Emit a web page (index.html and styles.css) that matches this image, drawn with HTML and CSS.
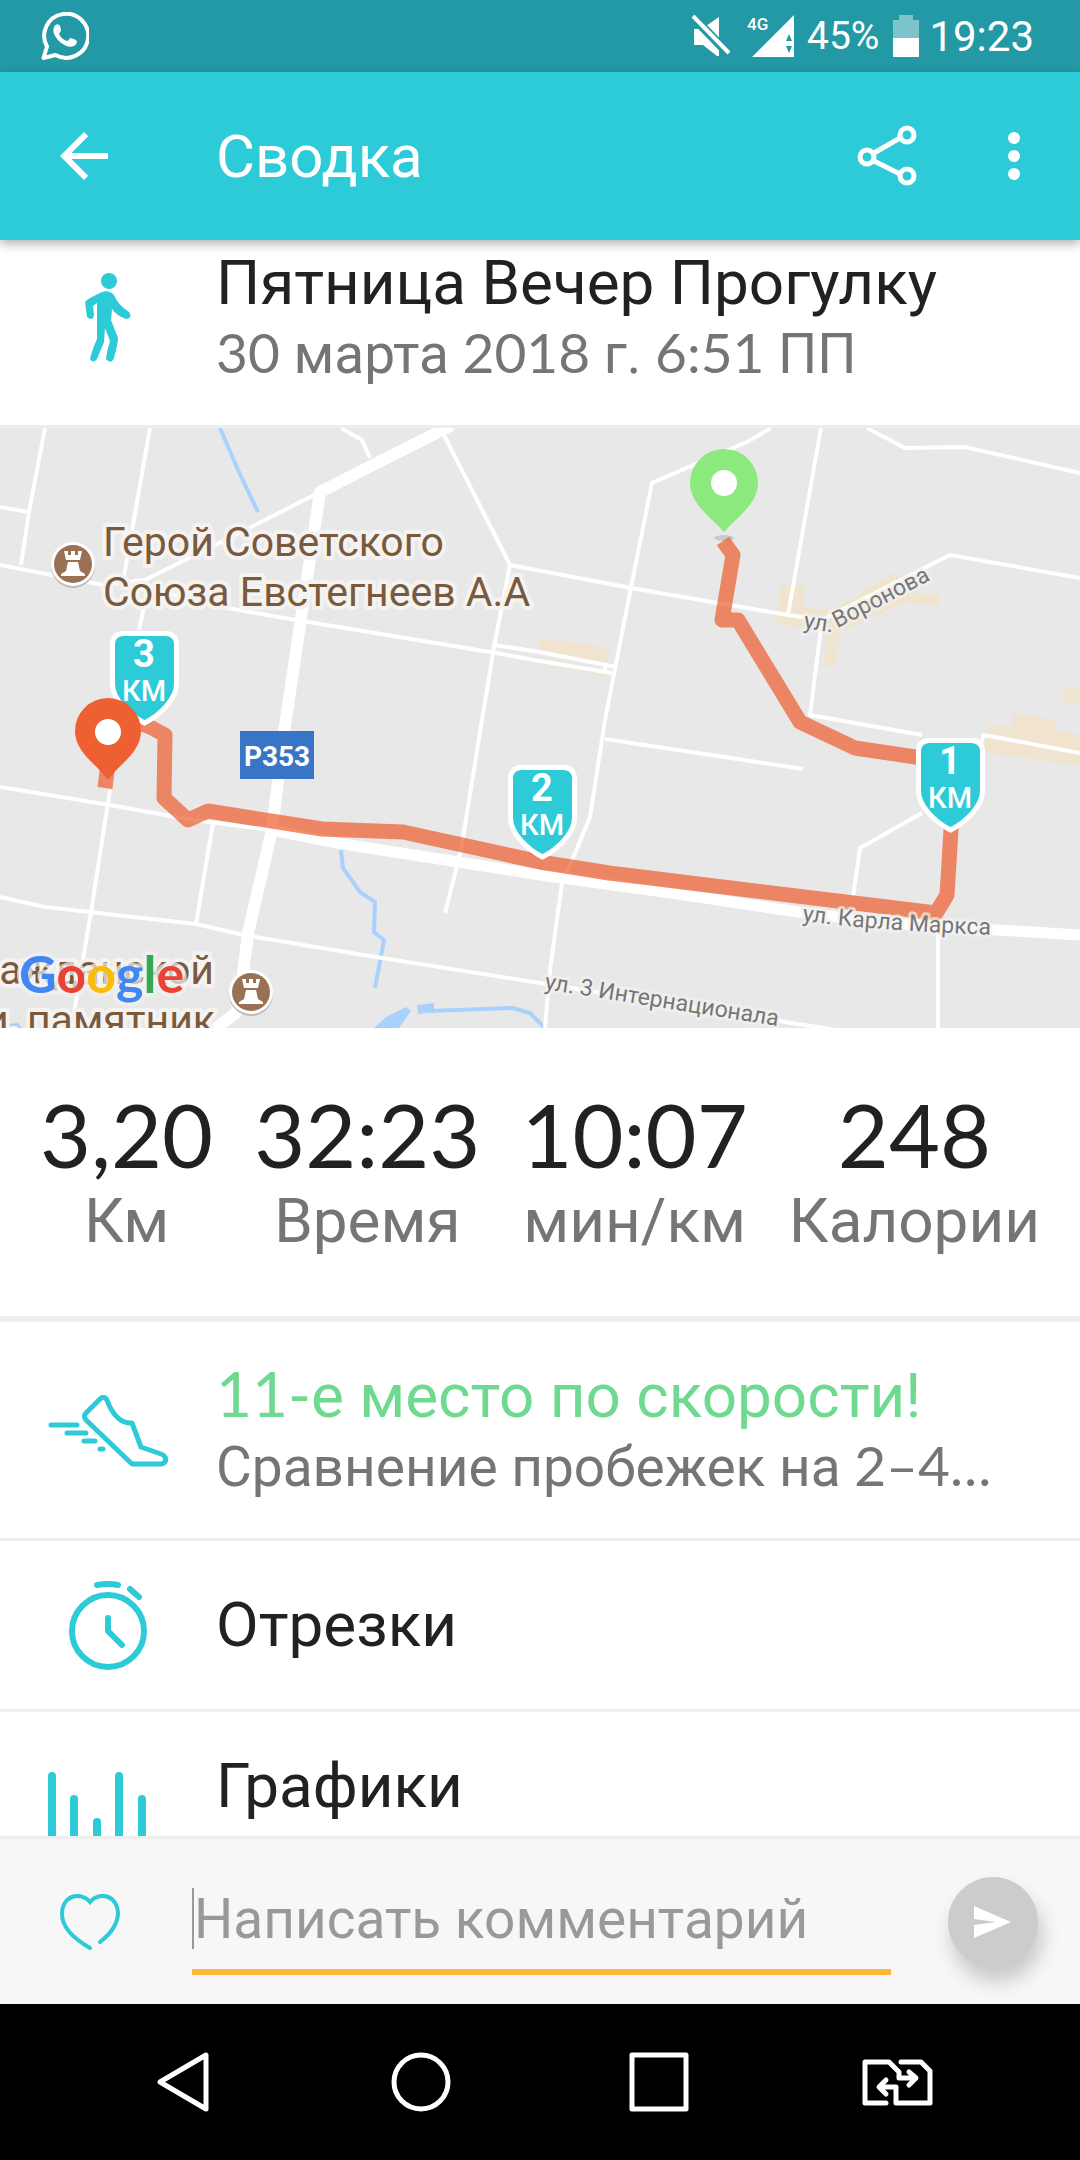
FILE: index.html
```html
<!DOCTYPE html>
<html lang="ru">
<head>
    <meta charset="UTF-8">
    <meta name="viewport" content="width=device-width, initial-scale=1">
    <title>Сводка</title>
    <link rel="stylesheet" href="styles.css">
</head>
<body>
    <div class="status-bar">
        <svg class="whatsapp" width="48" height="48" viewBox="0 0 48 48">
            <path d="M2.500 46L6 34.500A22 22 0 1 1 14.500 43Z" fill="none" stroke="#fff" stroke-width="4" stroke-linejoin="round"/>
            <path d="M13 15c2-4 5-3 6-1l1 4c0 2-2 3-2 4 2 4 5 6 8 7 2 0 2-3 4-3l5 2c2 2 0 5-2 6-4 2-9 0-14-4-5-5-8-10-6-15z" fill="#fff"/>
        </svg>
        <svg class="mute" width="40" height="42" viewBox="0 0 40 42">
            <path d="M3 14v16h9l14 11h2V2L15 11v3z" fill="#fff"/>
            <path d="M2 2L37 38" stroke="#2399a6" stroke-width="9"/>
            <path d="M2 1L38 38" stroke="#fff" stroke-width="4"/>
        </svg>
        <svg class="signal" width="48" height="42" viewBox="0 0 48 42">
            <path d="M47 0v42H5z" fill="#fff"/>
            <path d="M39 26l3-7 3 7zM39 31h6l-3 7z" fill="#2399a6"/>
            <text class="signal-text" x="0" y="15">4G</text>
        </svg>
        <span class="battery-text">45%</span>
        <svg class="battery" width="26" height="42" viewBox="0 0 26 42">
            <path d="M6 0h14v5h6v18H0V5h6z" fill="#7dc3ca"/>
            <path d="M0 23h26v19H0z" fill="#fff"/>
        </svg>
        <span class="clock">19:23</span>
    </div>

    <header class="toolbar">
        <button class="icon-button back" aria-label="Назад">
            <svg width="72" height="72" viewBox="0 0 24 24"><path d="M20 11H7.830l5.590-5.590L12 4l-8 8 8 8 1.410-1.410L7.830 13H20v-2z" fill="#fff"/></svg>
        </button>
        <h1>Сводка</h1>
        <button class="icon-button" aria-label="Поделиться">
            <svg width="60" height="62" viewBox="0 0 60 62" fill="none" stroke="#fff" stroke-width="5">
                <path d="M17 28L43 13M17 36l26 13"/>
                <circle cx="50" cy="10" r="7"/><circle cx="10" cy="32" r="7"/><circle cx="50" cy="51" r="7"/>
            </svg>
        </button>
        <button class="icon-button menu" aria-label="Меню">
            <svg width="12" height="48" viewBox="0 0 12 48" fill="#fff"><circle cx="6" cy="6" r="6"/><circle cx="6" cy="24" r="6"/><circle cx="6" cy="42" r="6"/></svg>
        </button>
    </header>

    <main>
        <section class="row summary">
            <svg class="row-icon" width="46" height="90" viewBox="0 0 46 90">
                <circle cx="24" cy="8" r="8" fill="#2dcad7"/>
                <path d="M13 21Q22 15 29 22Q33 32 44 39Q48 45 41 46Q32 43 27 36L26 47L33 65Q33 70 29 85Q26 92 21 86Q22 77 25 68L20 55L19 69L12 86Q8 91 5 86Q7 77 12 66V30L8 33L9 42Q8 49 2 44L0 29Q2 26 13 21z" fill="#2dcad7"/>
            </svg>
            <div class="row-text">
                <h2 class="title">Пятница Вечер Прогулку</h2>
                <p class="subtitle"><span class="num">30</span> марта <span class="num">2018</span> г. <span class="num">6:51</span> ПП</p>
            </div>
        </section>

        <svg class="map" viewBox="0 0 1080 600" role="img" aria-label="Карта прогулки">
            <defs>
                <path id="voronova" d="M803 200L830 204L950 142"/>
                <path id="marksa" d="M802 493Q880 503 1000 507"/>
                <path id="shield" d="M13 2.500H56Q66 3 66.500 13V53C66.500 68 50 84 34.500 92C19 84 2.500 68 2.500 53V13Q3 3 13 2.500Z"/>
                <g id="castle">
                    <circle r="22" cy="2" fill="#bbb"/>
                    <circle r="22" fill="#fff"/>
                    <circle r="19" fill="#9b7155"/>
                    <path d="M-9-13h4v4h3v-4h4v4h3v-4h4l-2 9H-7zM-5-2H5L7 7l5 3v2H-12v-2l5-3z" fill="#fff"/>
                </g>
            </defs>
            <rect width="1080" height="600" fill="#e8e8e8"/>

            <!-- застройка -->
            <g fill="#f0e4cf">
                <path d="M540 212l35 2 34 6v18l-69-13zM534 228l71 15v5l-68-13z"/>
                <path d="M781 157h22v22l23 3 7 0 65-40v22l41 3-1 12-33-5-65 30-4 35-12-2 2-32-52-11 4-20z"/>
                <path d="M1064 261h16v15h-16zM988 297l24 2 1-14 43 7v10l24 5v25l-5 5-91-13z"/>
            </g>

            <!-- вода -->
            <g fill="none" stroke="#a9d1fd" stroke-width="4">
                <path d="M220 0L238 42L258 84M341 422L343 440L360 464L375 474L374 504L384 512L375 560"/>
                <path d="M430 583L513 580L530 585L545 600"/>
            </g>
            <path d="M374 600l12-11 20-10 5 4-12 17zM417 577l17-2v9l-16 2zM0 597l18-2 4 5H0z" fill="#a9d1fd"/>

            <!-- улицы -->
            <g fill="none" stroke="#fff" stroke-width="4">
                <path d="M45 0L29 84L21 137M0 79L29 84M150 0L124 148M0 137L103 157L145 152L255 97L320 64"/>
                <path d="M147 165L139 202M145 160L227 180L296 192L496 225L540 233L612 245M341 0L362 12L370 30"/>
                <path d="M444 7L510 137L631 160L712 174L788 187L822 192L950 127L1080 150M510 137L494 219L482 292L461 422L445 485"/>
                <path d="M494 217L540 224L616 239M605 239v7M771 0L747 14L652 55L631 159L605 292L590 389L571 435L562 455L550 542L545 600"/>
                <path d="M821 0L788 187M822 192L810 287L922 307M867 0L905 20L965 19L1080 45M605 311L803 341"/>
                <path d="M922 385L860 420L853 469M975 330L984 307L1080 325M0 359L110 377L193 392L272 402"/>
                <path d="M0 469L45 479L196 496L244 507L382 530L540 555L836 602M110 362L91 484L74 585M213 395L196 496M938 499V600"/>
            </g>
            <g fill="none" stroke="#fff" stroke-width="11" stroke-linejoin="round">
                <path d="M452 -3L320 64L284 304L272 402L248 505L240 570L236 585L212 603" stroke-width="12"/>
                <path d="M272 402L337 415L458 434L540 447L678 466L798 484L884 495L1080 507"/>
            </g>

            <g class="poi-text">
                <text x="103" y="128">Герой Советского</text>
                <text x="103" y="178">Союза Евстегнеев А.А</text>
                <text x="214" y="556" text-anchor="end">ажданской</text>
                <text x="215" y="606" text-anchor="end">и, памятник</text>
            </g>
            <use href="#castle" x="73" y="136"/>
            <use href="#castle" x="251" y="564"/>
            <rect x="240" y="303" width="74" height="48" fill="#3875c6"/>
            <text class="road-sign" x="277" y="338">P353</text>

            <ellipse cx="724" cy="110" rx="10" ry="3" fill="#c9c9c9"/>
            <path d="M723 113L733 127L722 192H738L800 294L855 320L922 330L952 335L951 402L947 467L936 485L609 445L540 434L403 404L322 401L208 383L188 392L164 370L165 307L150 299L114 285L105 360" fill="none" stroke="#ee5b2c" stroke-opacity=".7" stroke-width="15" stroke-linejoin="round"/>

            <g class="street-text">
                <text><textPath href="#voronova">ул. Воронова</textPath></text>
                <text><textPath href="#marksa">ул. Карла Маркса</textPath></text>
                <text transform="translate(544 561) rotate(9)">ул. 3 Интернационала</text>
            </g>

            <g class="km">
                <use href="#shield" x="110" y="203"/>
                <text class="km-number" x="144" y="239">3</text>
                <text class="km-unit" x="144" y="273">КМ</text>
                <use href="#shield" x="508" y="337"/>
                <text class="km-number" x="542" y="373">2</text>
                <text class="km-unit" x="542" y="407">КМ</text>
                <use href="#shield" x="916" y="310"/>
                <text class="km-number" x="950" y="346">1</text>
                <text class="km-unit" x="950" y="380">КМ</text>
            </g>
            <path d="M724 104C712 90 690 76 690 55a34 34 0 0 1 68 0C758 76 736 90 724 104z" fill="#8ce97e"/>
            <circle cx="724" cy="55" r="13" fill="#fff"/>
            <path d="M108 352C98 337 75 325 75 303a33 33 0 0 1 66 0C141 325 118 337 108 352z" fill="#ee6031"/>
            <circle cx="108" cy="304" r="13" fill="#fff"/>

            <text class="google" x="19" y="565"><tspan fill="#4285f4">G</tspan><tspan fill="#ea4335">o</tspan><tspan fill="#fbbc05">o</tspan><tspan fill="#4285f4">g</tspan><tspan fill="#34a853">l</tspan><tspan fill="#ea4335">e</tspan></text>
        </svg>

        <dl class="stats">
            <div class="stat"><dd>3,20</dd><dt>Км</dt></div>
            <div class="stat"><dd>32:23</dd><dt>Время</dt></div>
            <div class="stat"><dd>10:07</dd><dt>мин/км</dt></div>
            <div class="stat"><dd>248</dd><dt>Калории</dt></div>
        </dl>

        <a class="row insight" href="#compare">
            <svg class="row-icon" width="120" height="72" viewBox="0 0 120 72" fill="none" stroke="#2dcad7" stroke-width="5" stroke-linecap="round" stroke-linejoin="round">
                <path d="M52 4L38 18Q35 21 38 25L84 69H114Q119 67 117 62Q116 60 113 59L93 52L84 28Q70 29 61 10L59 5Q56 0 52 4z"/>
                <path d="M3 30H29M19 38H38M36 46H47M52 54H55"/>
            </svg>
            <div class="row-text">
                <h2 class="title green"><span class="num">11-</span>е место по скорости!</h2>
                <p class="subtitle">Сравнение пробежек на <span class="num">2–4…</span></p>
            </div>
        </a>

        <a class="row" href="#splits">
            <svg class="row-icon" width="78" height="90" viewBox="0 0 78 90" fill="none" stroke="#2dcad7" stroke-width="6" stroke-linecap="round" stroke-linejoin="round">
                <circle cx="39" cy="51" r="36"/>
                <path d="M39 38V51L53 65M28 5Q39 3 49 5M61 9L70 17"/>
            </svg>
            <div class="row-text">
                <h2 class="title">Отрезки</h2>
            </div>
        </a>

        <a class="row charts" href="#charts">
            <svg class="row-icon" width="120" height="90" viewBox="0 0 120 90" stroke="#2dcad7" stroke-width="8" stroke-linecap="round">
                <path d="M4 4V86M26 27V86M49 50V86M71 4V86M94 27V86"/>
            </svg>
            <div class="row-text">
                <h2 class="title">Графики</h2>
            </div>
        </a>
    </main>

    <form class="comment">
        <button class="icon-button like" type="button" aria-label="Нравится">
            <svg width="60" height="56" viewBox="0 0 60 56" fill="none" stroke="#2dcad7" stroke-width="4" stroke-linecap="round"><path d="M30 54Q2 38 2 20C2 1 21-3 30 8C39-3 58 1 58 20Q57 35 40 48"/></svg>
        </button>
        <div class="comment-field">
            <span class="caret"></span>
            <input type="text" aria-label="Написать комментарий" placeholder="Написать комментарий">
        </div>
        <button class="send" type="submit" aria-label="Отправить">
            <svg width="38" height="32" viewBox="0 0 38 32"><path d="M0 0L37 16L0 32V19L22 16L0 13z" fill="#fff"/></svg>
        </button>
    </form>

    <nav class="nav-bar">
        <button class="icon-button" aria-label="Назад">
            <svg width="52" height="60" viewBox="0 0 52 60" fill="none" stroke="#fff" stroke-width="5" stroke-linejoin="round"><path d="M49 3V57L3 30z"/></svg>
        </button>
        <button class="icon-button" aria-label="Домой">
            <svg width="60" height="60" viewBox="0 0 60 60" fill="none" stroke="#fff" stroke-width="5"><circle cx="30" cy="30" r="27"/></svg>
        </button>
        <button class="icon-button" aria-label="Недавние">
            <svg width="60" height="60" viewBox="0 0 60 60" fill="none" stroke="#fff" stroke-width="5" stroke-linejoin="round"><path d="M3 3H57V57H3z"/></svg>
        </button>
        <button class="icon-button" aria-label="Сменить SIM">
            <svg width="72" height="48" viewBox="0 0 72 48" fill="none" stroke="#fff" stroke-width="5" stroke-linecap="round" stroke-linejoin="round">
                <path d="M25 45H4V4H28L38 14V20H54M48 14L55 20L48 27M40 4H60L69 13V45H35V29H19M25 22L18 29L25 36"/>
            </svg>
        </button>
    </nav>
</body>
</html>
```
FILE: styles.css
```css
* {
    box-sizing: border-box;
}

body {
    display: flex;
    flex-direction: column;
    height: 100vh;
    margin: 0;
    background-color: #ffffff;
    color: #212121;
    font-family: Roboto, "Noto Sans", sans-serif;
}

h1, h2, p, dl, dd, dt {
    margin: 0;
    font-weight: 400;
}

svg {
    display: block;
    flex-shrink: 0;
}

.icon-button {
    display: flex;
    align-items: center;
    justify-content: center;
    padding: 0;
    border: none;
    background: none;
    cursor: pointer;
}

.num {
    font-family: Lato, sans-serif;
    line-height: 1;
}

/* Строка состояния */
.status-bar {
    display: flex;
    align-items: center;
    flex-shrink: 0;
    height: 72px;
    padding: 0 46px 0 41px;
    background-color: #2399a6;
    color: #ffffff;
}

.mute {
    margin-left: auto;
    margin-right: 16px;
}

.signal {
    margin-right: 12px;
    overflow: visible;
}

.signal-text {
    font-size: 17px;
    font-weight: 500;
    fill: #ffffff;
}

.battery-text {
    font-size: 39px;
}

.battery {
    margin: 0 10px 0 14px;
}

.clock {
    font-size: 42px;
}

/* Верхняя панель */
.toolbar {
    display: flex;
    align-items: center;
    flex-shrink: 0;
    position: relative;
    height: 168px;
    padding: 0 60px 0 48px;
    background-color: #2dcad7;
    box-shadow: 0 4px 10px rgba(0, 0, 0, 0.3);
    color: #ffffff;
}

.toolbar h1 {
    flex: 1;
    margin-left: 96px;
    font-size: 60px;
}

.toolbar .menu {
    margin-left: 91px;
}

main {
    flex: 1;
    min-height: 0;
    overflow: hidden;
}

/* Строки списка */
.row {
    display: grid;
    grid-template-columns: 216px 1fr;
    align-items: center;
    min-height: 171px;
    border-bottom: 3px solid #eeeeee;
    color: inherit;
    text-decoration: none;
}

.row-icon {
    justify-self: center;
}

.title {
    font-size: 62px;
    line-height: 72px;
}

.subtitle {
    color: #757575;
    font-size: 55px;
    line-height: 70px;
}

.green {
    color: #6fda8f;
}

.summary {
    padding: 7px 0 36px;
}

.insight {
    padding: 38px 0 36px;
}

.charts {
    align-items: start;
    padding-top: 38px;
}

.charts .row-icon {
    margin-top: 22px;
}

/* Карта */
.map {
    width: 100%;
    height: auto;
}

.poi-text {
    fill: #7a5a3c;
    font-size: 41px;
    stroke: #f4f3f1;
    stroke-width: 8px;
    stroke-linejoin: round;
    paint-order: stroke;
}

.street-text {
    fill: #757575;
    font-size: 23px;
    stroke: #f1f1f1;
    stroke-opacity: 0.7;
    stroke-width: 6px;
    stroke-linejoin: round;
    paint-order: stroke;
}

.road-sign {
    fill: #ffffff;
    font-size: 28px;
    font-weight: 700;
    text-anchor: middle;
}

.km {
    fill: #ffffff;
    text-anchor: middle;
}

.km use {
    fill: #2dcad7;
    stroke: #ffffff;
    stroke-width: 5px;
}

.km-number {
    font-size: 38px;
    font-weight: 700;
}

.km-unit {
    font-size: 29px;
    font-weight: 500;
}

.google {
    font-family: Lato, sans-serif;
    font-size: 52px;
    font-weight: 700;
    stroke: #f1f1f1;
    stroke-opacity: 0.7;
    stroke-width: 8px;
    stroke-linejoin: round;
    paint-order: stroke;
}

/* Показатели */
.stats {
    display: flex;
    justify-content: space-between;
    padding: 54px 40px 60px;
    border-bottom: 6px solid #eeeeee;
}

.stat {
    text-align: center;
}

.stat dd {
    font-family: Lato, sans-serif;
    font-size: 88px;
    line-height: 104px;
}

.stat dt {
    color: #757575;
    font-size: 62px;
    line-height: 70px;
}

/* Комментарий */
.comment {
    display: flex;
    align-items: center;
    flex-shrink: 0;
    height: 168px;
    padding: 0 45px 0 60px;
    border-top: 3px solid #eeeeee;
    background-color: #f7f7f7;
}

.comment-field {
    display: flex;
    align-items: center;
    flex: 1;
    height: 107px;
    margin: 0 57px 0 72px;
    border-bottom: 6px solid #fcb63a;
}

.caret {
    width: 2px;
    height: 61px;
    background-color: #999999;
}

.comment input {
    flex: 1;
    min-width: 0;
    height: 100%;
    padding: 0;
    border: none;
    outline: none;
    background: none;
    color: #212121;
    font-family: inherit;
    font-size: 55px;
}

.comment input::placeholder {
    color: #999999;
    opacity: 1;
}

.send {
    display: flex;
    align-items: center;
    justify-content: center;
    flex-shrink: 0;
    width: 90px;
    height: 90px;
    margin-right: 2px;
    padding: 0;
    border: none;
    border-radius: 50%;
    background-color: #cccccc;
    box-shadow: 4px 14px 20px rgba(0, 0, 0, 0.2);
    cursor: pointer;
}

/* Навигация */
.nav-bar {
    display: grid;
    grid-template-columns: repeat(4, 1fr);
    flex-shrink: 0;
    height: 156px;
    padding: 0 64px;
    background-color: #000000;
}
```
